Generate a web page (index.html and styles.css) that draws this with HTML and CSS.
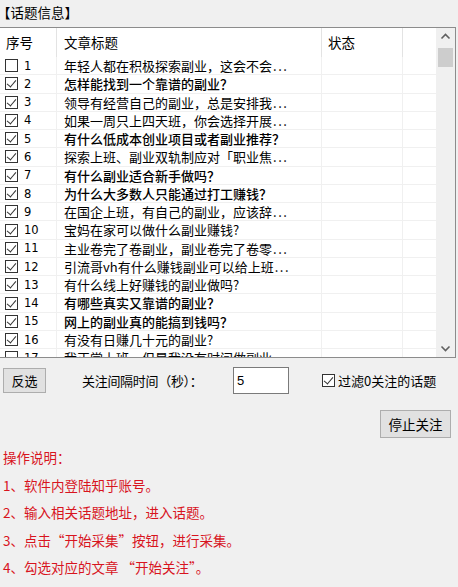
FILE: index.html
```html
<!DOCTYPE html>
<html lang="zh">
<head>
<meta charset="utf-8">
<title>话题信息</title>
<link rel="stylesheet" href="styles.css">
</head>
<body>
<div class="title">【话题信息】</div>
<div class="listbox">
  <div class="grid">
    <div class="row head">
      <div class="c1">序号</div><div class="c2">文章标题</div><div class="c3">状态</div><div class="c4"></div>
    </div>
    <div class="row"><div class="c1"><span class="cb"></span><span class="num">1</span></div><div class="c2">年轻人都在积极探索副业，这会不会<span class="ell">...</span></div><div class="c3"></div><div class="c4"></div></div>
    <div class="row"><div class="c1"><span class="cb on"></span><span class="num">2</span></div><div class="c2 b">怎样能找到一个靠谱的副业？</div><div class="c3"></div><div class="c4"></div></div>
    <div class="row"><div class="c1"><span class="cb on"></span><span class="num">3</span></div><div class="c2">领导有经营自己的副业，总是安排我<span class="ell">...</span></div><div class="c3"></div><div class="c4"></div></div>
    <div class="row"><div class="c1"><span class="cb on"></span><span class="num">4</span></div><div class="c2">如果一周只上四天班，你会选择开展<span class="ell">...</span></div><div class="c3"></div><div class="c4"></div></div>
    <div class="row"><div class="c1"><span class="cb on"></span><span class="num">5</span></div><div class="c2 b">有什么低成本创业项目或者副业推荐？</div><div class="c3"></div><div class="c4"></div></div>
    <div class="row"><div class="c1"><span class="cb on"></span><span class="num">6</span></div><div class="c2">探索上班、副业双轨制应对「职业焦<span class="ell">...</span></div><div class="c3"></div><div class="c4"></div></div>
    <div class="row"><div class="c1"><span class="cb on"></span><span class="num">7</span></div><div class="c2 b">有什么副业适合新手做吗？</div><div class="c3"></div><div class="c4"></div></div>
    <div class="row"><div class="c1"><span class="cb on"></span><span class="num">8</span></div><div class="c2 b">为什么大多数人只能通过打工赚钱？</div><div class="c3"></div><div class="c4"></div></div>
    <div class="row"><div class="c1"><span class="cb on"></span><span class="num">9</span></div><div class="c2">在国企上班，有自己的副业，应该辞<span class="ell">...</span></div><div class="c3"></div><div class="c4"></div></div>
    <div class="row"><div class="c1"><span class="cb on"></span><span class="num">10</span></div><div class="c2">宝妈在家可以做什么副业赚钱?</div><div class="c3"></div><div class="c4"></div></div>
    <div class="row"><div class="c1"><span class="cb on"></span><span class="num">11</span></div><div class="c2">主业卷完了卷副业，副业卷完了卷零<span class="ell">...</span></div><div class="c3"></div><div class="c4"></div></div>
    <div class="row"><div class="c1"><span class="cb on"></span><span class="num">12</span></div><div class="c2">引流哥vh有什么赚钱副业可以给上班<span class="ell">...</span></div><div class="c3"></div><div class="c4"></div></div>
    <div class="row"><div class="c1"><span class="cb on"></span><span class="num">13</span></div><div class="c2">有什么线上好赚钱的副业做吗?</div><div class="c3"></div><div class="c4"></div></div>
    <div class="row"><div class="c1"><span class="cb on"></span><span class="num">14</span></div><div class="c2 b">有哪些真实又靠谱的副业？</div><div class="c3"></div><div class="c4"></div></div>
    <div class="row"><div class="c1"><span class="cb on"></span><span class="num">15</span></div><div class="c2 b">网上的副业真的能搞到钱吗？</div><div class="c3"></div><div class="c4"></div></div>
    <div class="row"><div class="c1"><span class="cb on"></span><span class="num">16</span></div><div class="c2">有没有日赚几十元的副业?</div><div class="c3"></div><div class="c4"></div></div>
    <div class="row"><div class="c1"><span class="cb"></span><span class="num">17</span></div><div class="c2">我正常上班，但是我没有时间做副业<span class="ell">...</span></div><div class="c3"></div><div class="c4"></div></div>
  </div>
  <div class="scrollbar">
    <svg class="arrow" width="19" height="17" viewBox="0 0 19 17"><path d="M5.5 10.5 L9.5 6.5 L13.5 10.5" fill="none" stroke="#606060" stroke-width="1.6"/></svg>
    <div class="thumb"></div>
    <div class="track"></div>
    <svg class="arrow" width="19" height="17" viewBox="0 0 19 17"><path d="M5.5 6.5 L9.5 10.5 L13.5 6.5" fill="none" stroke="#606060" stroke-width="1.6"/></svg>
  </div>
</div>

<div class="controls">
  <button class="btn btn-inv">反选</button>
  <span class="lbl">关注间隔时间（秒）：</span>
  <span class="input">5</span>
  <label class="filter"><span class="cb on"></span>过滤0关注的话题</label>
</div>
<div class="controls2">
  <button class="btn btn-stop">停止关注</button>
</div>

<div class="help">
  <div>操作说明：</div>
  <div>1、软件内登陆知乎账号。</div>
  <div>2、输入相关话题地址，进入话题。</div>
  <div>3、点击“开始采集”按钮，进行采集。</div>
  <div>4、勾选对应的文章 “开始关注”。</div>
</div>
</body>
</html>
```

FILE: styles.css
```css
html, body {
  margin: 0;
  padding: 0;
  background: #f0f0f0;
}
body {
  width: 458px;
  height: 587px;
  overflow: hidden;
  font-family: "Noto Sans CJK SC", "Noto Sans", sans-serif;
  font-size: 13px;
  color: #000;
}
.title {
  height: 27px;
  line-height: 24px;
  margin-left: -3px;
  font-size: 13.5px;
  white-space: nowrap;
}
.listbox {
  display: flex;
  height: 331px;
  margin: 0 2px 0 -1px;
  border: 1px solid #8c8c8c;
  background: #fff;
  box-sizing: border-box;
  overflow: hidden;
}
.grid {
  flex: 1;
  overflow: hidden;
}
.row {
  display: flex;
  height: 18.27px;
  line-height: 18px;
  border-bottom: 1px solid #f0f0f0;
  box-sizing: border-box;
  white-space: nowrap;
}
.row.head {
  height: 29px;
  line-height: 28px;
  border-bottom: none;
  font-size: 13.5px;
}
.c1, .c2, .c3, .c4 {
  box-sizing: border-box;
  overflow: hidden;
  border-right: 1px solid #f0f0f0;
}
.head .c1, .head .c2, .head .c3, .head .c4 {
  border-right-color: #e3e3e3;
}
.c1 {
  width: 57px;
  padding-left: 5px;
  display: flex;
  align-items: center;
}
.head .c1 { display: block; padding-left: 6px; }
.c2 { width: 265px; padding-left: 7px; }
.c3 { width: 81px; padding-left: 6px; }
.c4 { flex: 1; border-right: none; }
.b { font-weight: 500; }
.ell { letter-spacing: 1.5px; margin-left: 1px; }
.num {
  margin-left: 6px;
  font-family: "DejaVu Sans", sans-serif;
  font-size: 11.5px;
}
.cb {
  display: inline-block;
  width: 13px;
  height: 13px;
  border: 1px solid #333;
  box-sizing: border-box;
  background: #fff;
  position: relative;
  flex: none;
}
.cb.on::after {
  content: "";
  position: absolute;
  left: 3px;
  top: 0px;
  width: 4px;
  height: 8px;
  border: solid #333;
  border-width: 0 1.5px 1.5px 0;
  transform: rotate(40deg);
}
.scrollbar {
  width: 19px;
  flex: none;
  background: #f0f0f0;
  display: flex;
  flex-direction: column;
  align-items: center;
}
.arrow { display: block; flex: none; }
.thumb {
  width: 15px;
  height: 19px;
  margin-top: 3px;
  background: #cdcdcd;
  flex: none;
}
.track { flex: 1; }

.controls {
  display: flex;
  align-items: center;
  margin-top: 9px;
  padding-left: 3px;
  height: 27px;
}
.btn {
  font-family: "Noto Sans CJK SC", sans-serif;
  font-size: 13px;
  background: #e1e1e1;
  border: 1px solid #adadad;
  color: #000;
  padding: 0;
  margin: 0;
  box-sizing: border-box;
}
.btn-inv { width: 43px; height: 25px; flex: none; }
.lbl {
  margin-left: 36px;
  width: 130px;
  flex: none;
  font-size: 13px;
  letter-spacing: -0.3px;
  white-space: nowrap;
}
.input {
  margin-left: 21px;
  width: 56px;
  height: 27px;
  flex: none;
  box-sizing: border-box;
  border: 1px solid #7a7a7a;
  background: #fff;
  padding-left: 3px;
  line-height: 25px;
  font-family: "Liberation Sans", sans-serif;
  font-size: 13px;
}
.filter {
  margin-left: 33px;
  display: flex;
  align-items: center;
  gap: 3px;
  white-space: nowrap;
  font-size: 13px;
}
.controls2 {
  display: flex;
  justify-content: flex-end;
  margin-top: 16px;
  padding-right: 7px;
}
.btn-stop { width: 71px; height: 28px; font-size: 13.5px; }

.help {
  margin-top: 6px;
  padding-left: 3px;
  color: #d8141e;
  font-size: 13.5px;
  line-height: 27.5px;
  white-space: nowrap;
}
```
